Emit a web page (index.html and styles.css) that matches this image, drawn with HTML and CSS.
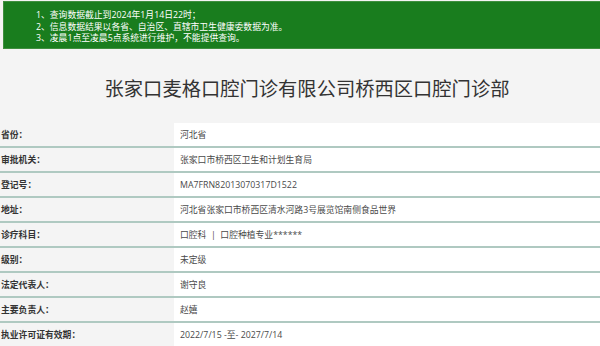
FILE: index.html
```html
<!DOCTYPE html>
<html lang="zh-CN">
<head>
<meta charset="utf-8">
<title>张家口麦格口腔门诊有限公司桥西区口腔门诊部</title>
<link rel="stylesheet" href="styles.css">
</head>
<body>
<div class="notice">
  <p>1、查询数据截止到2024年1月14日22时；</p>
  <p>2、信息数据结果以各省、自治区、直辖市卫生健康委数据为准。</p>
  <p>3、凌晨1点至凌晨5点系统进行维护，不能提供查询。</p>
</div>
<h1 class="title">张家口麦格口腔门诊有限公司桥西区口腔门诊部</h1>
<div class="info">
  <div class="row"><div class="label">省份：</div><div class="value">河北省</div></div>
  <div class="row"><div class="label">审批机关：</div><div class="value">张家口市桥西区卫生和计划生育局</div></div>
  <div class="row"><div class="label">登记号：</div><div class="value">MA7FRN82013070317D1522</div></div>
  <div class="row"><div class="label">地址：</div><div class="value">河北省张家口市桥西区清水河路3号展览馆南侧食品世界</div></div>
  <div class="row"><div class="label">诊疗科目：</div><div class="value">口腔科 &nbsp;| &nbsp;口腔种植专业******</div></div>
  <div class="row"><div class="label">级别：</div><div class="value">未定级</div></div>
  <div class="row"><div class="label">法定代表人：</div><div class="value">谢守良</div></div>
  <div class="row"><div class="label">主要负责人：</div><div class="value">赵嬉</div></div>
  <div class="row"><div class="label">执业许可证有效期：</div><div class="value">2022/7/15 -至- 2027/7/14</div></div>
</div>
</body>
</html>
```

FILE: styles.css
```css
html, body {
  margin: 0;
  padding: 0;
  background: #f4f4f4;
  font-family: "Open Sans", "Noto Sans CJK SC", sans-serif;
  color: #444;
}

.notice {
  margin: 1px 0 0 3px;
  height: 48px;
  box-sizing: border-box;
  padding: 8px 0 0 32px;
  background: #197d1e;
  border: 1px solid #3f8f3f;
  border-right: none;
  color: #fff;
  font-size: 8.8px;
  line-height: 11.6px;
}

.notice p {
  margin: 0;
}

.title {
  margin: 0;
  height: 74px;
  box-sizing: border-box;
  padding: 3px 0 0 14px;
  display: flex;
  align-items: center;
  justify-content: center;
  font-family: "Noto Sans CJK SC", sans-serif;
  font-weight: 400;
  font-size: 19.3px;
  color: #333;
}

.info {
  display: flex;
  flex-direction: column;
}

.row {
  display: flex;
  height: 25px;
  box-sizing: border-box;
  border-bottom: 2px solid #afc9c1;
}

.label {
  width: 173px;
  flex: none;
  display: flex;
  align-items: center;
  padding-left: 1px;
  font-size: 8.8px;
  font-weight: 700;
  color: #333;
}

.value {
  flex: 1;
  display: flex;
  align-items: center;
  padding-left: 6px;
  background: #fff;
  font-size: 8.8px;
  color: #4a4a4a;
  white-space: pre;
}
```
